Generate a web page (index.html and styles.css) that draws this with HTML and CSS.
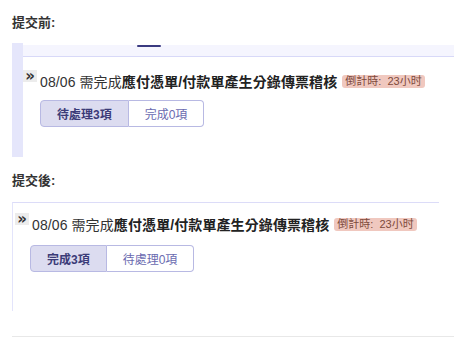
FILE: index.html
```html
<!DOCTYPE html>
<html lang="zh-Hant">
<head>
  <meta charset="UTF-8">
  <meta name="viewport" content="width=device-width, initial-scale=1.0">
  <title>提交前後</title>
  <link rel="stylesheet" href="styles.css">
</head>
<body>

  <div class="page">
    <h3 class="section-title">提交前:</h3>
    <div class="task-box before">
      <div class="rail"></div>
      <div class="panel">
        <div class="panel-top"><span class="tab-mark"></span></div>
        <div class="panel-body">
          <div class="task-row">
            <span class="expand">»</span>
            <div class="task-line">
              <span class="task-name">08/06 需完成<b>應付憑單/付款單產生分錄傳票稽核</b></span>
              <span class="badge">倒計時:&nbsp;&nbsp;23小时</span>
            </div>
          </div>
          <div class="switch">
            <button class="switch-btn active">待處理3項</button>
            <button class="switch-btn">完成0項</button>
          </div>
        </div>
      </div>
    </div>

    <h3 class="section-title after-title">提交後:</h3>
    <div class="task-box after">
      <div class="task-row">
        <span class="expand">»</span>
        <div class="task-line">
          <span class="task-name">08/06 需完成<b>應付憑單/付款單產生分錄傳票稽核</b></span>
          <span class="badge">倒計時:&nbsp;&nbsp;23小时</span>
        </div>
      </div>
      <div class="switch">
        <button class="switch-btn active">完成3項</button>
        <button class="switch-btn">待處理0項</button>
      </div>
    </div>

    <div class="bottom-line"></div>
  </div>

</body>
</html>
```

FILE: styles.css
```css
body {
  margin: 0;
  font-family: 'Liberation Sans', 'Noto Sans CJK TC', sans-serif;
  color: #333;
  background: #fff;
}
.page {
  padding: 13px 0 0 12px;
}
.section-title {
  margin: 0 0 10px;
  font-size: 13px;
  line-height: 20px;
  font-weight: bold;
  color: #333;
}
.after-title {
  margin-top: 14px;
  margin-bottom: 11px;
}
.task-box.before {
  display: flex;
  height: 114px;
}
.rail {
  width: 11px;
  background: #e5e6fb;
}
.panel {
  flex: 1;
}
.panel-top {
  height: 11px;
  background: #f5f5fe;
  border-bottom: 1px solid #d8d9f8;
  padding-left: 114px;
}
.tab-mark {
  display: block;
  width: 24px;
  height: 2px;
  margin-top: 2px;
  background: #3a3a80;
  border-radius: 1px;
}
.panel-body {
  padding-top: 13px;
}
.task-row {
  display: flex;
  align-items: flex-start;
}
.expand {
  width: 14px;
  height: 12px;
  background: #ececec;
  font-family: 'DejaVu Sans', sans-serif;
  font-size: 15px;
  line-height: 12px;
  font-weight: bold;
  color: #333;
  text-align: center;
}
.task-line {
  display: flex;
  align-items: center;
  height: 22px;
  margin-left: 3px;
}
.task-name {
  font-size: 14px;
  letter-spacing: 0.1px;
  color: #333;
}
.task-name b {
  color: #222;
}
.badge {
  margin-left: 5px;
  padding: 0 3px;
  height: 13px;
  line-height: 13px;
  font-size: 11px;
  color: #7d4a3c;
  background: #f0c8bf;
  border-radius: 3px;
  white-space: nowrap;
}
.switch {
  display: flex;
  margin: 8px 0 0 17px;
}
.switch-btn {
  height: 27px;
  padding: 0 16px;
  font-family: inherit;
  font-size: 12px;
  color: #6a6ab0;
  background: #fff;
  border: 1px solid #b8b9e3;
  cursor: pointer;
}
.switch-btn:first-child {
  border-radius: 4px 0 0 4px;
}
.switch-btn:last-child {
  border-left: none;
  border-radius: 0 4px 4px 0;
}
.switch-btn.active {
  background: #dcdcf0;
  color: #3b3b78;
  font-weight: bold;
}
.task-box.after {
  width: 427px;
  height: 109px;
  border-top: 1px solid #dcdcf8;
  border-left: 1px solid #e3e4fb;
  padding: 10px 0 0 2px;
  box-sizing: border-box;
}
.task-box.after .switch {
  margin-top: 10px;
  margin-left: 15px;
}
.bottom-line {
  margin-top: 25px;
  height: 1px;
  background: #e8e8e8;
}
```
